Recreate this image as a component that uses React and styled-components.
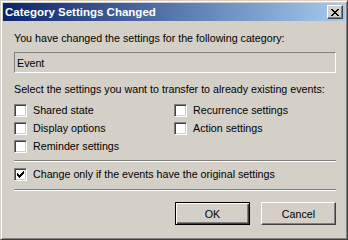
import React from 'react'
import styled, { createGlobalStyle } from 'styled-components'

const GlobalStyle = createGlobalStyle`
  html, body {
    margin: 0;
    padding: 0;
    background: #d4d0c8;
  }
  body {
    font-family: "Liberation Sans", Arial, sans-serif;
    font-size: 10.7px;
    color: #000;
  }
`

const Window = styled.div`
  box-sizing: border-box;
  width: 348px;
  height: 240px;
  display: flex;
  flex-direction: column;
  background: #d4d0c8;
  border: 1px solid;
  border-color: #d4d0c8 #404040 #404040 #d4d0c8;
  box-shadow: inset 1px 1px #fff, inset -1px -1px #808080;
  padding: 2px;
`

const TitleBar = styled.div`
  height: 18px;
  display: flex;
  align-items: center;
  justify-content: space-between;
  padding: 0 2px 0 2px;
  background: linear-gradient(to right, #0a246a, #a6caf0);
`

const Title = styled.span`
  color: #fff;
  font-weight: bold;
  font-size: 11.5px;
  line-height: 18px;
`

const CloseButton = styled.div`
  box-sizing: border-box;
  width: 16px;
  height: 14px;
  display: flex;
  align-items: center;
  justify-content: center;
  background: #d4d0c8;
  border: 1px solid;
  border-color: #fff #404040 #404040 #fff;
  box-shadow: inset -1px -1px #808080;
`

const Body = styled.div`
  flex: 1;
  display: flex;
  flex-direction: column;
  padding: 11px 9px 0 11px;
`

const Label = styled.div`
  line-height: 13px;
  white-space: nowrap;
  margin-top: ${({ gap }) => gap || 0}px;
`

const Field = styled.div`
  box-sizing: border-box;
  height: 21px;
  margin-top: 7px;
  padding-left: 2px;
  display: flex;
  align-items: center;
  border: 1px solid;
  border-color: #808080 #fff #fff #808080;
`

const OptionGrid = styled.div`
  display: grid;
  grid-template-columns: 160px 1fr;
  row-gap: 5px;
  margin-top: 8px;
`

const Option = styled.label`
  display: flex;
  align-items: center;
  gap: 6px;
  height: 13px;
  line-height: 13px;
  white-space: nowrap;
  margin-top: ${({ gap }) => gap || 0}px;
  grid-column: ${({ col }) => col || 'auto'};
  grid-row: ${({ row }) => row || 'auto'};
`

const Box = styled.span`
  box-sizing: border-box;
  flex: none;
  width: 13px;
  height: 13px;
  display: flex;
  align-items: center;
  justify-content: center;
  background: #fff;
  border: 1px solid;
  border-color: #808080 #fff #fff #808080;
  box-shadow: inset 1px 1px #404040, inset -1px -1px #d4d0c8;
`

const Separator = styled.div`
  height: 0;
  border-top: 1px solid #808080;
  border-bottom: 1px solid #fff;
  margin-top: ${({ gap }) => gap}px;
`

const ButtonRow = styled.div`
  display: flex;
  justify-content: flex-end;
  gap: 11px;
  margin-top: 11px;
`

const PushButton = styled.div`
  box-sizing: border-box;
  width: 75px;
  height: 23px;
  display: flex;
  align-items: center;
  justify-content: center;
  background: #d4d0c8;
  border: 1px solid;
  border-color: ${({ primary }) => (primary ? '#000' : '#fff #404040 #404040 #fff')};
  box-shadow: ${({ primary }) =>
    primary
      ? 'inset 1px 1px #fff, inset -1px -1px #404040, inset -2px -2px #808080'
      : 'inset -1px -1px #808080'};
`

const CloseGlyph = () => (
  <svg width="8" height="7" viewBox="0 0 8 7" shapeRendering="crispEdges">
    <path
      fill="#000"
      d="M0 0h2v1H0zM6 0h2v1H6zM1 1h2v1H1zM5 1h2v1H5zM2 2h4v1H2zM3 3h2v1H3zM2 4h4v1H2zM1 5h2v1H1zM5 5h2v1H5zM0 6h2v1H0zM6 6h2v1H6z"
    />
  </svg>
)

const CheckGlyph = () => (
  <svg width="7" height="7" viewBox="0 0 7 7" shapeRendering="crispEdges">
    <path
      fill="#000"
      d="M6 0h1v1H6zM5 1h2v1H5zM0 2h1v1H0zM4 2h3v1H4zM0 3h2v1H0zM3 3h3v1H3zM0 4h5v1H0zM1 5h3v1H1zM2 6h1v1H2z"
    />
  </svg>
)

const Checkbox = ({ checked, children, ...rest }) => (
  <Option {...rest}>
    <Box>{checked ? <CheckGlyph /> : null}</Box>
    <span>{children}</span>
  </Option>
)

export default function App() {
  return (
    <>
      <GlobalStyle />
      <Window>
        <TitleBar>
          <Title>Category Settings Changed</Title>
          <CloseButton>
            <CloseGlyph />
          </CloseButton>
        </TitleBar>
        <Body>
          <Label>You have changed the settings for the following category:</Label>
          <Field>Event</Field>
          <Label gap={10}>Select the settings you want to transfer to already existing events:</Label>
          <OptionGrid>
            <Checkbox col={1} row={1}>Shared state</Checkbox>
            <Checkbox col={1} row={2}>Display options</Checkbox>
            <Checkbox col={1} row={3}>Reminder settings</Checkbox>
            <Checkbox col={2} row={1}>Recurrence settings</Checkbox>
            <Checkbox col={2} row={2}>Action settings</Checkbox>
          </OptionGrid>
          <Separator gap={7} />
          <Checkbox gap={6} checked>Change only if the events have the original settings</Checkbox>
          <Separator gap={8} />
          <ButtonRow>
            <PushButton primary>OK</PushButton>
            <PushButton>Cancel</PushButton>
          </ButtonRow>
        </Body>
      </Window>
    </>
  )
}
